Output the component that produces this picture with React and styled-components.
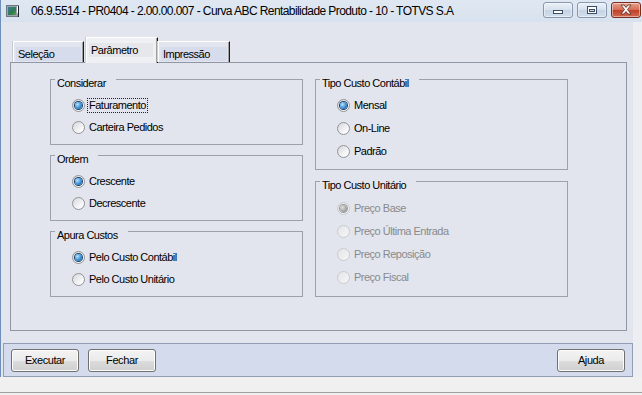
import React from 'react';
import styled, { createGlobalStyle } from 'styled-components';

const Global = createGlobalStyle`
    html, body {
        margin: 0;
        padding: 0;
        background: #e2e5ee;
    }
    * {
        box-sizing: border-box;
    }
`

const Window = styled.div`
    width: 642px;
    height: 395px;
    display: flex;
    flex-direction: column;
    background: #e2e5ee;
    font-family: "Liberation Sans", Arial, sans-serif;
    font-size: 11px;
    letter-spacing: -0.5px;
    color: #000;
    overflow: hidden;
`

const TitleBar = styled.div`
    height: 22px;
    flex-shrink: 0;
    display: flex;
    align-items: center;
    padding-left: 5px;
    background: linear-gradient(#dfe8f2, #d8e2ee);
    border-left: 1px solid #6d8fb9;
`

const Title = styled.span`
    margin-left: 11px;
    font-size: 12px;
    letter-spacing: -0.58px;
    color: #000;
    white-space: nowrap;
    flex: 1;
`

const Controls = styled.div`
    display: flex;
    gap: 3px;
    margin-top: -3px;
    margin-right: 1px;
`

const WinButton = styled.div`
    width: 30px;
    height: 16px;
    border-radius: 3px;
    display: flex;
    align-items: center;
    justify-content: center;
    border: 1px solid ${p => p.$close ? '#7b2d24' : '#8797ae'};
    background: ${p => p.$close
        ? 'linear-gradient(#e7a089, #d26c55 50%, #bf3f28 51%, #cf6a4f)'
        : 'linear-gradient(#eaf0f8, #d6e1ee 50%, #c6d3e4 51%, #d2deec)'};
    box-shadow: inset 0 0 0 1px rgba(255,255,255,0.45);
    & + & {
        margin-left: ${p => p.$close ? '1px' : '0'};
    }
`

const Middle = styled.div`
    flex: 1;
    display: flex;
    min-height: 0;
`

const Content = styled.div`
    width: 633px;
    display: flex;
    flex-direction: column;
    border-left: 1px solid #6d8fb9;
    padding-top: 15px;
`

const TabArea = styled.div`
    padding-left: 9px;
    display: flex;
    flex-direction: column;
`

const Strip = styled.div`
    flex: 1;
    background: #eceef2;
`

const TabRow = styled.div`
    display: flex;
    align-items: flex-end;
    margin-left: 3px;
    height: 25px;
    flex-shrink: 0;
    position: relative;
    z-index: 1;
`

const Tab = styled.div`
    height: ${p => p.$active ? '26px' : '21px'};
    width: ${p => p.$w}px;
    margin-bottom: ${p => p.$active ? '-1px' : '0'};
    margin-left: ${p => p.$active ? '2px' : '0'};
    padding: ${p => p.$active ? '5px 4px 0 2px' : '5px 2px 0 2px'};
    background: ${p => p.$active ? '#eff0f3' : '#e2e5ee'};
    border-left: 1px solid #fff;
    border-top: 1px solid #fff;
    border-right: 1px solid #1a1a1a;
    box-shadow: inset -1px 0 0 #a0a0a0, -1px 0 0 #c8ccd4;
`

const TabText = styled.div`
    height: 14px;
    line-height: 14px;
    padding-left: 2px;
    background: ${p => p.$active ? '#e6e7ea' : '#d7dcec'};
`

const Panel = styled.div`
    width: 617px;
    height: 269px;
    flex-shrink: 0;
    border: 1px solid #8f97a5;
    display: flex;
    gap: 12px;
    padding: 6px 0 0 39px;
`

const Column = styled.div`
    width: 253px;
    display: flex;
    flex-direction: column;
    gap: ${p => p.$gap}px;
`

const Group = styled.fieldset`
    margin: 0;
    padding: 0;
    border: 1px solid #9ba2ae;
    min-width: 0;
`

const Legend = styled.legend`
    margin-left: 4px;
    padding: 8px 10px 0 2px;
    line-height: 13px;
`

const GroupBody = styled.div`
    display: flex;
    flex-direction: column;
    padding: ${p => p.$pt}px 0 ${p => p.$pb}px 21px;
`

const Row = styled.label`
    height: ${p => p.$h}px;
    display: flex;
    align-items: center;
    gap: 4px;
    color: ${p => p.$disabled ? '#8a8a8a' : '#000'};
`

const Radio = styled.span`
    width: 13px;
    height: 13px;
    border-radius: 50%;
    flex-shrink: 0;
    display: flex;
    align-items: center;
    justify-content: center;
    border: 1px solid ${p => p.$disabled ? '#c9cbcf' : '#929498'};
    background: ${p => p.$disabled
        ? 'linear-gradient(135deg, #e4e5e8, #f6f6f7)'
        : 'linear-gradient(135deg, #d4d6da, #f8f8f9 70%)'};
    &::after {
        content: '';
        display: ${p => p.$checked ? 'block' : 'none'};
        width: 7px;
        height: 7px;
        border-radius: 50%;
        background: ${p => p.$disabled
            ? 'radial-gradient(circle at 35% 35%, #e0e0e0, #a4a4a4 60%, #888)'
            : 'radial-gradient(circle at 35% 35%, #b8e4ff, #3a8fd6 55%, #0d4a8c)'};
        box-shadow: 0 0 0 1px ${p => p.$disabled ? '#9a9a9a' : '#1c3f66'};
    }
`

const Caption = styled.span`
    line-height: 13px;
    padding: 0 1px;
    margin-left: -1px;
    outline: ${p => p.$focus ? '1px dotted #222' : 'none'};
`

const Gap = styled.div`
    height: 12px;
    flex-shrink: 0;
`

const ButtonBar = styled.div`
    margin-left: 2px;
    width: 630px;
    height: 34px;
    flex-shrink: 0;
    display: flex;
    align-items: center;
    gap: 9px;
    padding: 0 7px;
    background: #d4dbec;
    border: 1px solid #929eb5;
`

const Button = styled.button`
    width: 68px;
    height: 23px;
    padding: 0;
    font-family: inherit;
    font-size: 11px;
    letter-spacing: -0.4px;
    color: #000;
    border: 1px solid #707070;
    border-radius: 3px;
    background: linear-gradient(#f3f3f3, #ebebeb 50%, #dddddd 51%, #cfcfcf);
    box-shadow: inset 0 0 0 1px #fcfcfc;
    margin-left: ${p => p.$right ? 'auto' : '0'};
`

const StatusBar = styled.div`
    height: 16px;
    flex-shrink: 0;
    background: #f0f0f0;
    border-bottom: 1px solid #a0a0a0;
`

const Foot = styled.div`
    height: 2px;
    flex-shrink: 0;
    background: #f0f0f0;
`

const AppIcon = () => (
    <svg width="14" height="13" viewBox="0 0 14 13">
        <rect x="0.5" y="0.5" width="12" height="11" fill="#9aa4ae" stroke="#6f7780" />
        <defs>
            <linearGradient id="ic" x1="0" y1="0" x2="1" y2="1">
                <stop offset="0" stopColor="#3b7fa0" />
                <stop offset="0.6" stopColor="#2f7a4e" />
                <stop offset="1" stopColor="#5da04a" />
            </linearGradient>
        </defs>
        <rect x="2" y="2" width="8" height="8" fill="url(#ic)" />
        <rect x="11" y="1" width="2" height="7" fill="#fff" />
        <rect x="12" y="1" width="1" height="11" fill="#222" />
    </svg>
)

const MinIcon = () => (
    <svg width="12" height="10" viewBox="0 0 12 10">
        <rect x="1.5" y="5.5" width="9" height="3" fill="#fff" stroke="#3c4d66" />
    </svg>
)

const MaxIcon = () => (
    <svg width="12" height="10" viewBox="0 0 12 10">
        <rect x="1.5" y="1.5" width="9" height="7" fill="#fff" stroke="#3c4d66" />
        <rect x="3.5" y="4.5" width="5" height="2" fill="#c9d5e4" stroke="#3c4d66" />
    </svg>
)

const CloseIcon = () => (
    <svg width="14" height="11" viewBox="0 0 14 11">
        <path d="M2 1 L5 1 L7 3.5 L9 1 L12 1 L8.5 5.5 L12 10 L9 10 L7 7.5 L5 10 L2 10 L5.5 5.5 Z"
            fill="#fff" stroke="#5a2620" strokeWidth="0.8" strokeLinejoin="round" />
    </svg>
)

const groups = {
    left: [
        { title: 'Considerar', items: ['Faturamento', 'Carteira Pedidos'], checked: 0, focus: 0 },
        { title: 'Ordem', items: ['Crescente', 'Decrescente'], checked: 0 },
        { title: 'Apura Custos', items: ['Pelo Custo Contábil', 'Pelo Custo Unitário'], checked: 0 },
    ],
    right: [
        { title: 'Tipo Custo Contábil', items: ['Mensal', 'On-Line', 'Padrão'], checked: 0 },
        { title: 'Tipo Custo Unitário', items: ['Preço Base', 'Preço Última Entrada', 'Preço Reposição', 'Preço Fiscal'], checked: 0, disabled: true, pt: 5, pb: 7 },
    ],
}

const RadioGroup = ({ title, items, checked, focus, disabled, rowHeight, pt = 4, pb = 6 }) => (
    <Group>
        <Legend>{title}</Legend>
        <GroupBody $pt={pt} $pb={pb}>
            {items.map((label, i) => (
                <Row key={label} $h={rowHeight} $disabled={disabled}>
                    <Radio $checked={i === checked} $disabled={disabled} />
                    <Caption $focus={i === focus}>{label}</Caption>
                </Row>
            ))}
        </GroupBody>
    </Group>
)

export default function App() {
    return (
        <Window>
            <Global />
            <TitleBar>
                <AppIcon />
                <Title>06.9.5514 - PR0404 - 2.00.00.007 - Curva ABC Rentabilidade Produto - 10 - TOTVS S.A</Title>
                <Controls>
                    <WinButton><MinIcon /></WinButton>
                    <WinButton><MaxIcon /></WinButton>
                    <WinButton $close><CloseIcon /></WinButton>
                </Controls>
            </TitleBar>
            <Middle>
                <Content>
                    <TabArea>
                        <TabRow>
                            <Tab $w={71}><TabText>Seleção</TabText></Tab>
                            <Tab $w={72} $active><TabText $active>Parâmetro</TabText></Tab>
                            <Tab $w={72}><TabText>Impressão</TabText></Tab>
                        </TabRow>
                        <Panel>
                            <Column $gap={0}>
                                {groups.left.map(g => <RadioGroup key={g.title} {...g} rowHeight={22} />)}
                            </Column>
                            <Column $gap={1}>
                                {groups.right.map(g => <RadioGroup key={g.title} {...g} rowHeight={23} />)}
                            </Column>
                        </Panel>
                    </TabArea>
                    <Gap />
                    <ButtonBar>
                        <Button>Executar</Button>
                        <Button>Fechar</Button>
                        <Button $right>Ajuda</Button>
                    </ButtonBar>
                </Content>
                <Strip />
            </Middle>
            <StatusBar />
            <Foot />
        </Window>
    );
}
